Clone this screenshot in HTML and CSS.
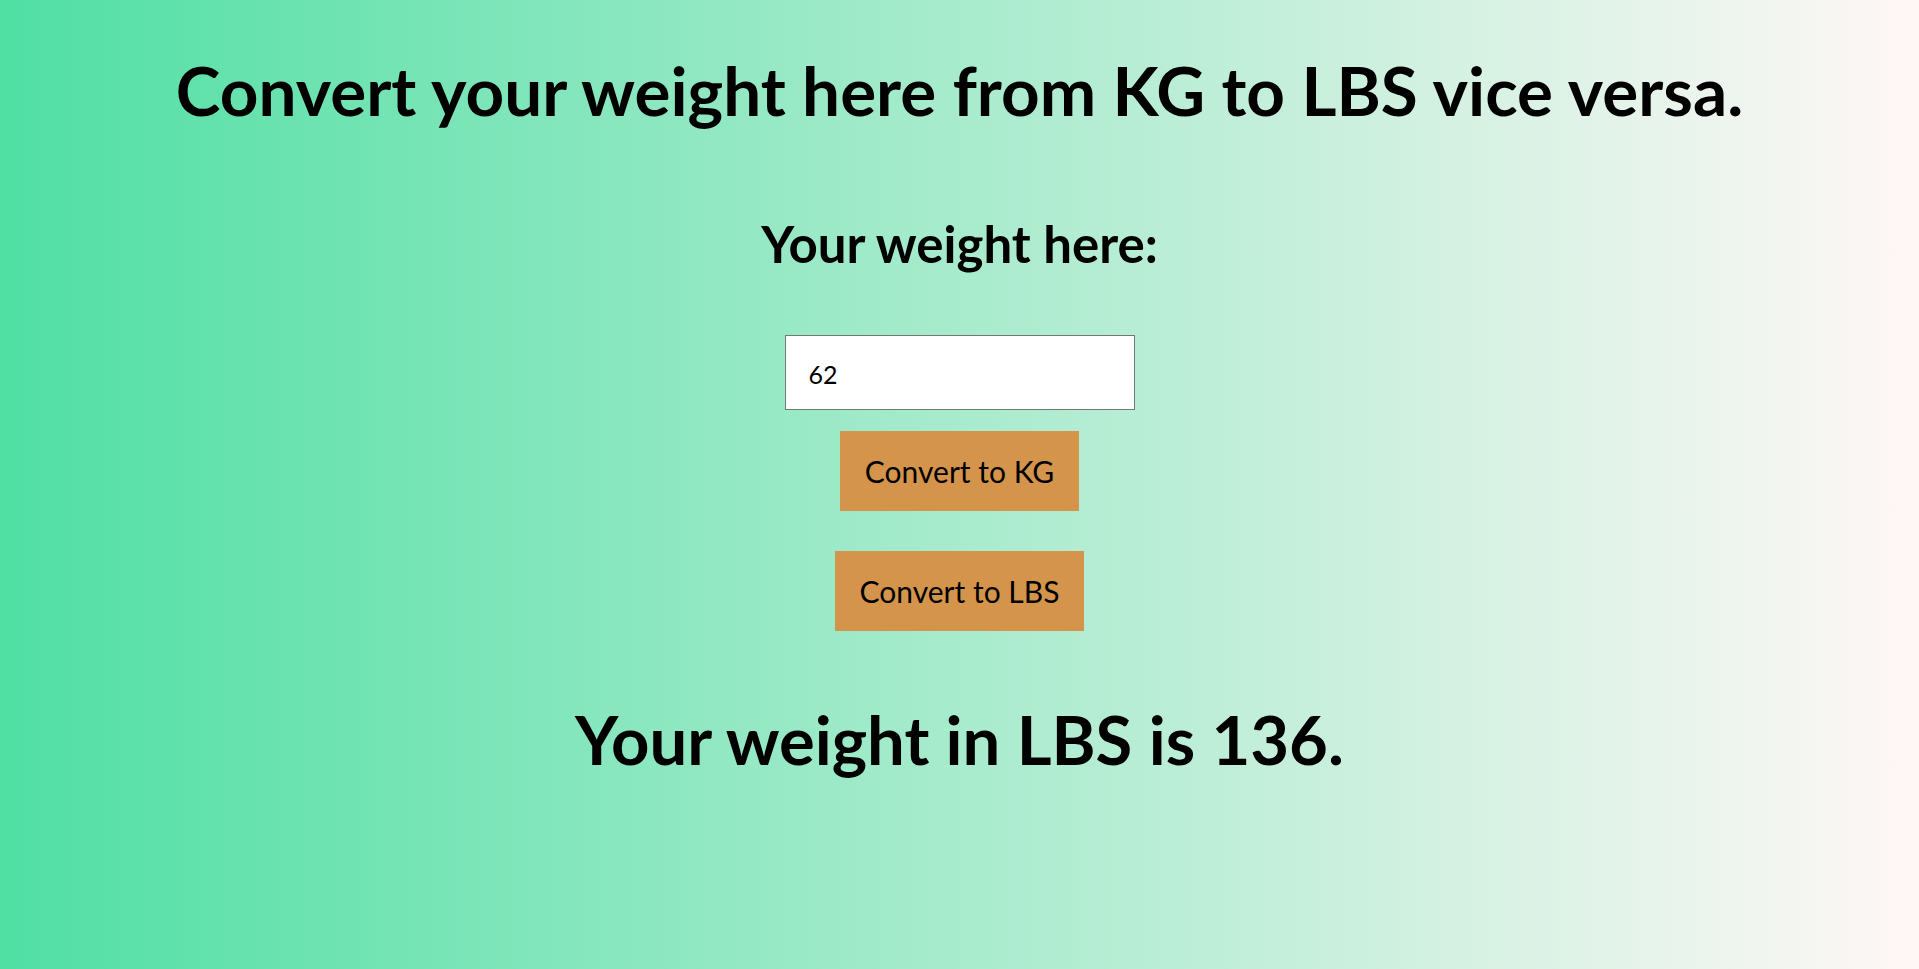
FILE: index.html
```html
<!DOCTYPE html>
<html lang="en">
<head>
<meta charset="utf-8">
<title>Weight Converter</title>
<link rel="stylesheet" href="styles.css">
</head>
<body>
<main class="page">
  <h1 class="title">Convert your weight here from KG to LBS vice versa.</h1>
  <h2 class="label">Your weight here:</h2>
  <input class="weight-input" type="text" value="62">
  <button class="btn btn-kg" type="button">Convert to KG</button>
  <button class="btn btn-lbs" type="button">Convert to LBS</button>
  <p class="result">Your weight in LBS is 136.</p>
</main>
</body>
</html>
```
FILE: styles.css
```css
html, body {
  margin: 0;
  padding: 0;
  height: 100%;
}

body {
  background: linear-gradient(to right, #50dfa4 0%, #fff7f6 100%);
  font-family: "Lato", "Open Sans", sans-serif;
  color: #000;
}

.page {
  display: flex;
  flex-direction: column;
  align-items: center;
  padding-top: 50px;
}

.title {
  margin: 0;
  font-size: 67.4px;
  font-weight: 700;
  line-height: 1.2;
  white-space: nowrap;
}

.label {
  margin: 82px 0 0;
  font-size: 51px;
  font-weight: 700;
  line-height: 1.2;
}

.weight-input {
  box-sizing: border-box;
  margin-top: 61px;
  width: 350px;
  height: 75px;
  padding: 2px 0 0 23px;
  border: 1px solid #767676;
  border-radius: 0;
  background: #fff;
  font-family: "Lato", "Open Sans", sans-serif;
  font-size: 25px;
  color: #000;
  outline: none;
}

.btn {
  box-sizing: border-box;
  height: 80px;
  padding: 0 25px;
  border: none;
  border-radius: 0;
  background: #d4944b;
  font-family: "Lato", "Open Sans", sans-serif;
  font-size: 30px;
  font-weight: 400;
  color: #000;
  line-height: 1.2;
  cursor: pointer;
}

.btn-kg {
  margin-top: 21px;
}

.btn-lbs {
  margin-top: 40px;
}

.result {
  margin: 68px 0 0;
  font-size: 67px;
  font-weight: 700;
  line-height: 1.2;
}
```
